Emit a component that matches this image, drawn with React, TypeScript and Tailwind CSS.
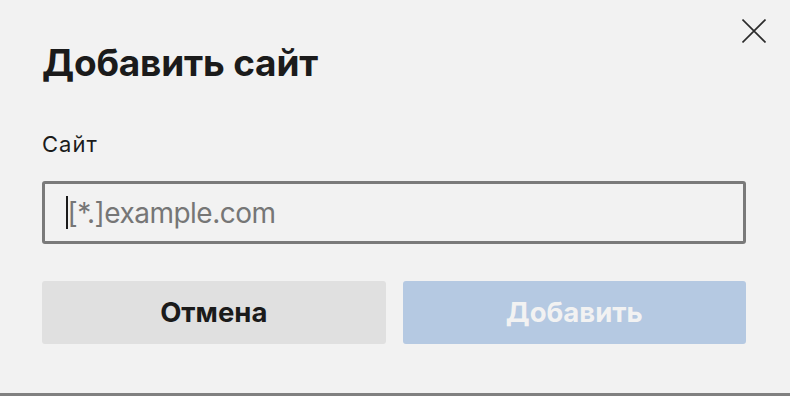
import React from "react";

export default function App() {
  return (
    <div
      className="w-[790px] h-[396px] bg-[#f2f2f2] border-b-[3px] border-[#808080] relative overflow-hidden"
      style={{ fontFamily: "Inter, 'Noto Sans', sans-serif" }}
    >
      <button className="absolute left-[742px] top-[19px] w-[24px] h-[24px]" aria-label="Закрыть">
        <svg width="24" height="24" viewBox="0 0 24 24" fill="none">
          <path d="M0.5 0.5L23.5 23.5M23.5 0.5L0.5 23.5" stroke="#2b2b2b" strokeWidth="1.6" />
        </svg>
      </button>
      <div className="pl-[42px] pr-[44px] pt-[41px] flex flex-col">
        <h1 className="text-[37px] leading-[44px] font-bold text-[#1b1b1b] tracking-[-0.2px]">Добавить сайт</h1>
        <label className="mt-[45px] text-[22px] leading-[28px] text-[#1b1b1b] tracking-[1px]">Сайт</label>
        <div className="mt-[23px] h-[63px] border-[3px] border-[#7a7a7a] rounded-[3px] flex items-center pl-[21px]">
          <div className="w-[1.5px] h-[33px] bg-[#1b1b1b]"></div>
          <span className="text-[28px] text-[#767676] leading-none tracking-[-0.5px]">[*.]example.com</span>
        </div>
        <div className="mt-[37px] flex gap-[17px]">
          <button className="flex-1 h-[63px] rounded-[3px] bg-[#e0e0e0] text-[27.5px] font-bold text-[#1b1b1b]">
            Отмена
          </button>
          <button className="flex-1 h-[63px] rounded-[3px] bg-[#b5c9e2] text-[27.5px] font-bold text-[#f2f2f2]">
            Добавить
          </button>
        </div>
      </div>
    </div>
  );
}
